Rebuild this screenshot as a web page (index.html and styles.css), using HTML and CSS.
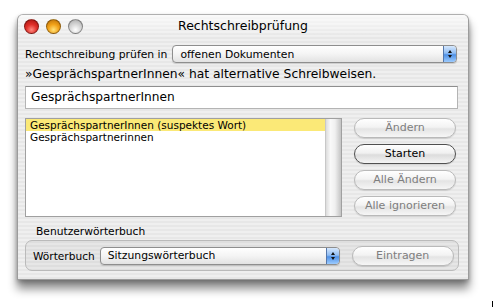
FILE: index.html
```html
<!DOCTYPE html>
<html lang="de">
<head>
  <meta charset="UTF-8" />
  <title>Rechtschreibprüfung</title>
  <link rel="stylesheet" href="styles.css">
</head>
<body>
  <div class="stage">
    <div class="window">
      <div class="titlebar">
        <div class="lights">
          <span class="light red"></span>
          <span class="light yellow"></span>
          <span class="light gray"></span>
        </div>
        <div class="title">Rechtschreibprüfung</div>
      </div>

      <div class="content">
        <div class="row check-in">
          <span class="label">Rechtschreibung prüfen in</span>
          <div class="popup wide">
            <span class="popup-text">offenen Dokumenten</span>
            <span class="popup-arrow"><i class="up"></i><i class="down"></i></span>
          </div>
        </div>

        <div class="message">»GesprächspartnerInnen« hat alternative Schreibweisen.</div>

        <div class="textfield">GesprächspartnerInnen</div>

        <div class="main">
          <div class="listbox">
            <div class="list">
              <div class="item selected">GesprächspartnerInnen (suspektes Wort)</div>
              <div class="item">Gesprächspartnerinnen</div>
            </div>
            <div class="scrollbar"></div>
          </div>
          <div class="buttons">
            <div class="btn disabled">Ändern</div>
            <div class="btn active">Starten</div>
            <div class="btn disabled">Alle Ändern</div>
            <div class="btn disabled">Alle ignorieren</div>
          </div>
        </div>

        <div class="group-label">Benutzerwörterbuch</div>
        <div class="group">
          <span class="label">Wörterbuch</span>
          <div class="popup dict">
            <span class="popup-text">Sitzungswörterbuch</span>
            <span class="popup-arrow"><i class="up"></i><i class="down"></i></span>
          </div>
          <div class="btn disabled add">Eintragen</div>
        </div>
      </div>
    </div>
  </div>
  <span class="corner-mark"></span>
</body>
</html>
```

FILE: styles.css
```css
* {
  box-sizing: border-box;
}

body {
  margin: 0;
  width: 494px;
  height: 307px;
  background: #ffffff;
  font-family: 'DejaVu Sans', 'Liberation Sans', sans-serif;
  color: #000;
  position: relative;
  overflow: hidden;
}

.stage {
  padding: 14px 25px 0 17px;
}

.window {
  height: 266px;
  border: 1px solid #9c9c9c;
  border-top-color: #b0b0b0;
  border-radius: 6px 6px 0 0;
  background: repeating-linear-gradient(to bottom, #efefef 0, #efefef 2px, #e7e7e7 2px, #e7e7e7 4px);
  box-shadow: 0 9px 10px rgba(0, 0, 0, 0.45), 0 2px 4px rgba(0, 0, 0, 0.25);
  overflow: hidden;
}

.titlebar {
  height: 22px;
  display: flex;
  align-items: center;
  position: relative;
  background: linear-gradient(to bottom, rgba(255, 255, 255, 0.7), rgba(255, 255, 255, 0));
}

.lights {
  display: flex;
  gap: 7px;
  padding-left: 6px;
  padding-top: 1px;
}

.light {
  width: 15px;
  height: 15px;
  border-radius: 50%;
  display: block;
  border: 1px solid rgba(0, 0, 0, 0.35);
}

.red {
  background: radial-gradient(circle at 50% 75%, #ff8a80 0, #e0302a 45%, #a3100c 100%);
}

.yellow {
  background: radial-gradient(circle at 50% 75%, #ffe27a 0, #f3a31a 45%, #b76b05 100%);
}

.gray {
  background: radial-gradient(circle at 50% 75%, #ffffff 0, #d8d8d8 45%, #a8a8a8 100%);
}

.title {
  position: absolute;
  left: 0;
  right: 0;
  top: 3px;
  text-align: center;
  font-size: 12.5px;
  pointer-events: none;
}

.content {
  padding: 8px 0 0 7px;
}

.row {
  display: flex;
  align-items: center;
}

.label {
  font-size: 10.8px;
  margin-right: 5px;
}

.popup {
  height: 18px;
  display: flex;
  align-items: center;
  border: 1px solid #8e8e8e;
  border-radius: 4px;
  background: linear-gradient(to bottom, #ffffff 0, #f4f4f4 50%, #e2e2e2 100%);
  box-shadow: 0 1px 1px rgba(0, 0, 0, 0.15);
  overflow: hidden;
}

.popup.wide {
  width: 285px;
}

.popup-text {
  flex: 1;
  font-size: 10.8px;
  padding-left: 7px;
}

.popup-arrow {
  width: 13px;
  height: 100%;
  display: flex;
  flex-direction: column;
  align-items: center;
  justify-content: center;
  gap: 2px;
  border-left: 1px solid #5577aa;
  border-radius: 0 3px 3px 0;
  background: linear-gradient(to bottom, #d6e8fd 0, #8fbcf3 45%, #4f91e6 55%, #9ccbff 100%);
}

.popup-arrow i {
  display: block;
  width: 0;
  height: 0;
  border-left: 2.5px solid transparent;
  border-right: 2.5px solid transparent;
}

.popup-arrow .up {
  border-bottom: 3px solid #111;
}

.popup-arrow .down {
  border-top: 3px solid #111;
}

.message {
  font-size: 12.3px;
  margin-top: 3px;
  line-height: 16px;
}

.textfield {
  margin-top: 4px;
  width: 433px;
  height: 23px;
  background: #fff;
  border: 1px solid #b4b4b4;
  border-top-color: #8e8e8e;
  font-size: 12.2px;
  line-height: 21px;
  padding-left: 5px;
}

.main {
  display: flex;
  margin-top: 9px;
}

.listbox {
  width: 317px;
  height: 99px;
  display: flex;
  border: 1px solid #a0a0a0;
  background: #fff;
}

.list {
  flex: 1;
}

.item {
  font-size: 10.5px;
  height: 12px;
  line-height: 12px;
  padding-left: 4px;
  white-space: nowrap;
}

.item.selected {
  background: #fbe977;
}

.scrollbar {
  width: 16px;
  border-left: 1px solid #c8c8c8;
  background: linear-gradient(to right, #dcdcdc 0, #f9f9f9 30%, #f0f0f0 60%, #c4c4c4 100%);
}

.buttons {
  display: flex;
  flex-direction: column;
  gap: 6px;
  margin-left: 12px;
}

.btn {
  width: 102px;
  height: 20px;
  border-radius: 10px;
  font-size: 11px;
  line-height: 18px;
  text-align: center;
  border: 1px solid #a9a9a9;
  background: linear-gradient(to bottom, #ffffff 0, #f3f3f3 45%, #e4e4e4 55%, #f6f6f6 100%);
  box-shadow: 0 1px 1px rgba(0, 0, 0, 0.12);
}

.btn.disabled {
  color: #7e7e7e;
  border-color: #b9b9b9;
}

.btn.active {
  color: #000;
  border-color: #505050;
  background: linear-gradient(to bottom, #ffffff 0, #f0f0f0 45%, #dcdcdc 55%, #f4f4f4 100%);
}

.group-label {
  font-size: 10.7px;
  margin: 8px 0 0 11px;
  line-height: 14px;
}

.group {
  margin-top: 1px;
  width: 434px;
  height: 31px;
  display: flex;
  align-items: center;
  border: 1px solid #bababa;
  border-radius: 7px;
  background: rgba(0, 0, 0, 0.035);
  padding-left: 7px;
}

.group .label {
  font-size: 10.6px;
  margin-right: 5px;
}

.popup.dict {
  width: 240px;
}

.btn.add {
  margin-left: 12px;
}

.corner-mark {
  position: absolute;
  left: 492px;
  top: 301px;
  width: 1px;
  height: 6px;
  background: #000;
}
```
